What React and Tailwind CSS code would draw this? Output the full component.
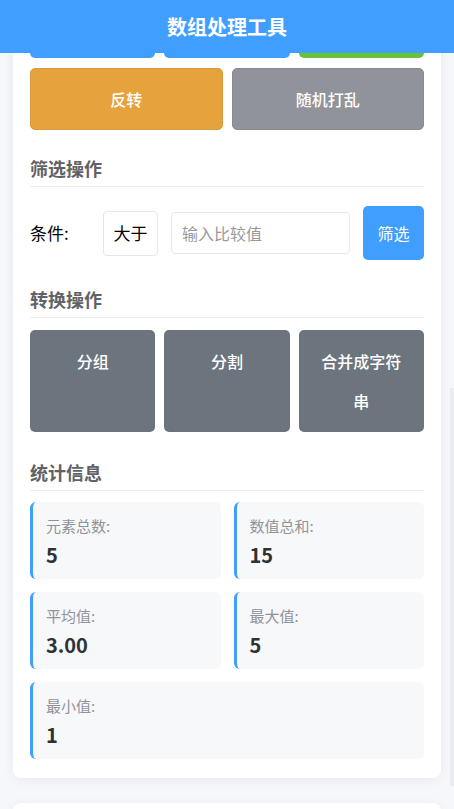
import React from 'react';

const topRow = ['bg-[#409eff]', 'bg-[#409eff]', 'bg-[#67c23a]'];

const transforms = ['分组', '分割', '合并成字符串'];

const stats = [
  { label: '元素总数:', value: '5' },
  { label: '数值总和:', value: '15' },
  { label: '平均值:', value: '3.00' },
  { label: '最大值:', value: '5' },
  { label: '最小值:', value: '1', wide: true },
];

const SectionTitle = ({ children, className }) => (
  <h3 className={`text-[18px] font-bold leading-[26px] text-[#606266] pb-[5px] border-b border-[#ebeef5] ${className}`}>
    {children}
  </h3>
);

const App = () => {
  return (
    <div
      className="relative flex flex-col h-[809px] overflow-hidden bg-[#f5f7fa]"
      style={{ fontFamily: '"Noto Sans CJK SC", "Noto Sans", sans-serif' }}
    >
      {/* header */}
      <div className="relative z-10 h-[53px] shrink-0 bg-[#409eff] flex items-center justify-center">
        <h1 className="text-[20px] font-bold text-white">数组处理工具</h1>
      </div>

      {/* scrolled body, top buttons tucked under the header */}
      <div className="flex-1 overflow-hidden">
        <div className="-mt-[57px] px-[13px]">
          <div className="bg-white rounded-[8px] shadow-[0_2px_12px_rgba(0,0,0,0.06)] px-[17px] pb-[19px]">
            <div className="grid grid-cols-3 gap-x-[9px]">
              {topRow.map((c, i) => (
                <div key={i} className={`h-[62px] rounded-[5px] ${c}`} />
              ))}
            </div>
            <div className="grid grid-cols-2 gap-x-[9px] mt-[10px]">
              <button className="h-[62px] rounded-[5px] bg-[#e6a23c] border border-[#d9993a] text-white text-[16px] font-medium">
                反转
              </button>
              <button className="h-[62px] rounded-[5px] bg-[#909399] border border-[#888b91] text-white text-[16px] font-medium">
                随机打乱
              </button>
            </div>

            <SectionTitle className="mt-[25px]">筛选操作</SectionTitle>
            <div className="flex items-center gap-[13px] mt-[19px] h-[54px]">
              <span className="w-[60px] text-[17px] text-black">条件:</span>
              <div className="w-[55px] h-[45px] border border-[#e4e7ed] rounded-[4px] flex items-center justify-center text-[17px] text-black">
                大于
              </div>
              <input
                className="flex-1 min-w-0 h-[42px] border border-[#e4e7ed] rounded-[4px] px-[10px] text-[16px] placeholder:text-[#999] outline-none"
                placeholder="输入比较值"
              />
              <button className="w-[61px] h-[54px] rounded-[5px] bg-[#409eff] text-white text-[16px]">
                筛选
              </button>
            </div>

            <SectionTitle className="mt-[26px]">转换操作</SectionTitle>
            <div className="grid grid-cols-3 gap-x-[9px] mt-[12px]">
              {transforms.map((t) => (
                <button
                  key={t}
                  className="rounded-[5px] bg-[#6c757d] text-white text-[16px] font-medium leading-[40px] py-[11px] px-[18px] flex justify-center items-start"
                >
                  <span className="text-center">{t}</span>
                </button>
              ))}
            </div>

            <SectionTitle className="mt-[27px]">统计信息</SectionTitle>
            <div className="grid grid-cols-2 gap-x-[13px] gap-y-[13px] mt-[11px]">
              {stats.map((s) => (
                <div
                  key={s.label}
                  className={`bg-[#f7f8fa] rounded-[6px] border-l-[3px] border-[#409eff] pl-[13px] pt-[13px] pb-[9px] ${s.wide ? 'col-span-2' : ''}`}
                >
                  <div className="text-[15px] leading-[21px] text-[#909399]">{s.label}</div>
                  <div className="mt-[4px] text-[20px] leading-[30px] font-bold text-[#303133]">{s.value}</div>
                </div>
              ))}
            </div>
          </div>

          <div className="mt-[25px] h-[120px] bg-white rounded-[8px] shadow-[0_2px_12px_rgba(0,0,0,0.06)]" />
        </div>
      </div>

      {/* edge of a side panel peeking in */}
      <div className="absolute z-20 right-0 top-[388px] w-[4px] h-[398px] bg-[#e9ebf0]" />
    </div>
  );
};

export default App;
